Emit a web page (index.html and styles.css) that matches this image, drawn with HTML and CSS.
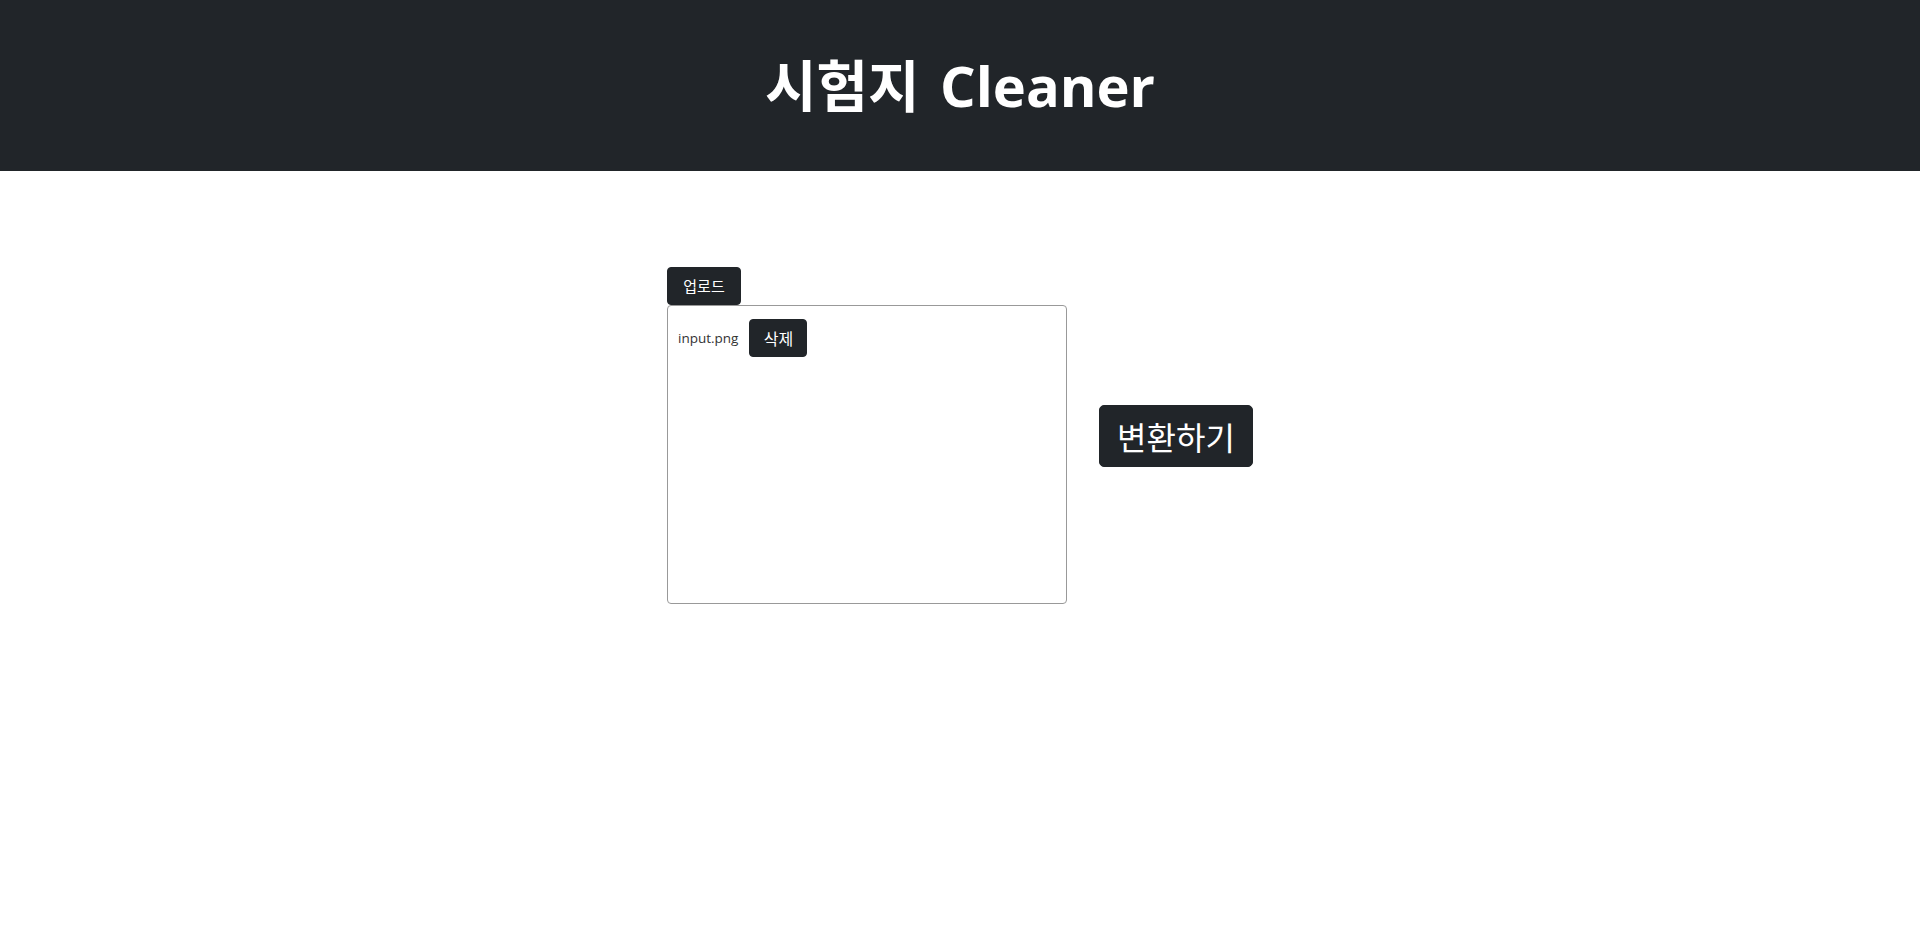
FILE: index.html
```html
<!DOCTYPE html>
<html lang="ko">
<head>
<meta charset="utf-8">
<title>시험지 Cleaner</title>
<link rel="stylesheet" href="styles.css">
</head>
<body>
<header class="topbar">
  <h1 class="title">시험지 Cleaner</h1>
</header>
<main class="main">
  <div class="workspace">
    <div class="upload-col">
      <button class="btn btn-upload">업로드</button>
      <div class="file-box">
        <div class="file-row">
          <span class="file-name">input.png</span>
          <button class="btn btn-delete">삭제</button>
        </div>
      </div>
    </div>
    <button class="btn btn-convert">변환하기</button>
  </div>
</main>
</body>
</html>
```

FILE: styles.css
```css
* { box-sizing: border-box; }
html, body { margin: 0; padding: 0; }
body {
  font-family: "Open Sans", "Noto Sans CJK KR", sans-serif;
  background: #fff;
  color: #212529;
}
.topbar {
  height: 171px;
  background: #212529;
  display: flex;
  align-items: center;
  justify-content: center;
}
.title {
  margin: 0;
  color: #fff;
  font-family: "Open Sans", "Noto Sans CJK KR", sans-serif;
  font-weight: 700;
  font-size: 56px;
  line-height: 1.2;
  word-spacing: 6px;
}
.main {
  display: flex;
  justify-content: center;
  padding-top: 96px;
}
.workspace {
  display: flex;
  align-items: center;
  gap: 32px;
}
.upload-col {
  display: flex;
  flex-direction: column;
  align-items: flex-start;
}
.btn {
  font-family: "Noto Sans CJK KR", sans-serif;
  background: #212529;
  color: #fff;
  border: 1px solid #212529;
  border-radius: 4px;
  cursor: pointer;
  padding: 0;
}
.btn-upload, .btn-delete {
  font-size: 15px;
  height: 38px;
  line-height: 36px;
}
.btn-upload { width: 74px; }
.btn-delete { width: 58px; font-size: 16px; }
.file-box {
  width: 400px;
  height: 299px;
  border: 1px solid #999;
  border-radius: 4px;
  padding: 13px 10px;
}
.file-row {
  display: flex;
  align-items: center;
  gap: 11px;
}
.file-name {
  font-size: 13.5px;
  color: #333;
}
.btn-convert {
  font-size: 32px;
  width: 154px;
  height: 62px;
  line-height: 60px;
  border-radius: 5px;
}
```
